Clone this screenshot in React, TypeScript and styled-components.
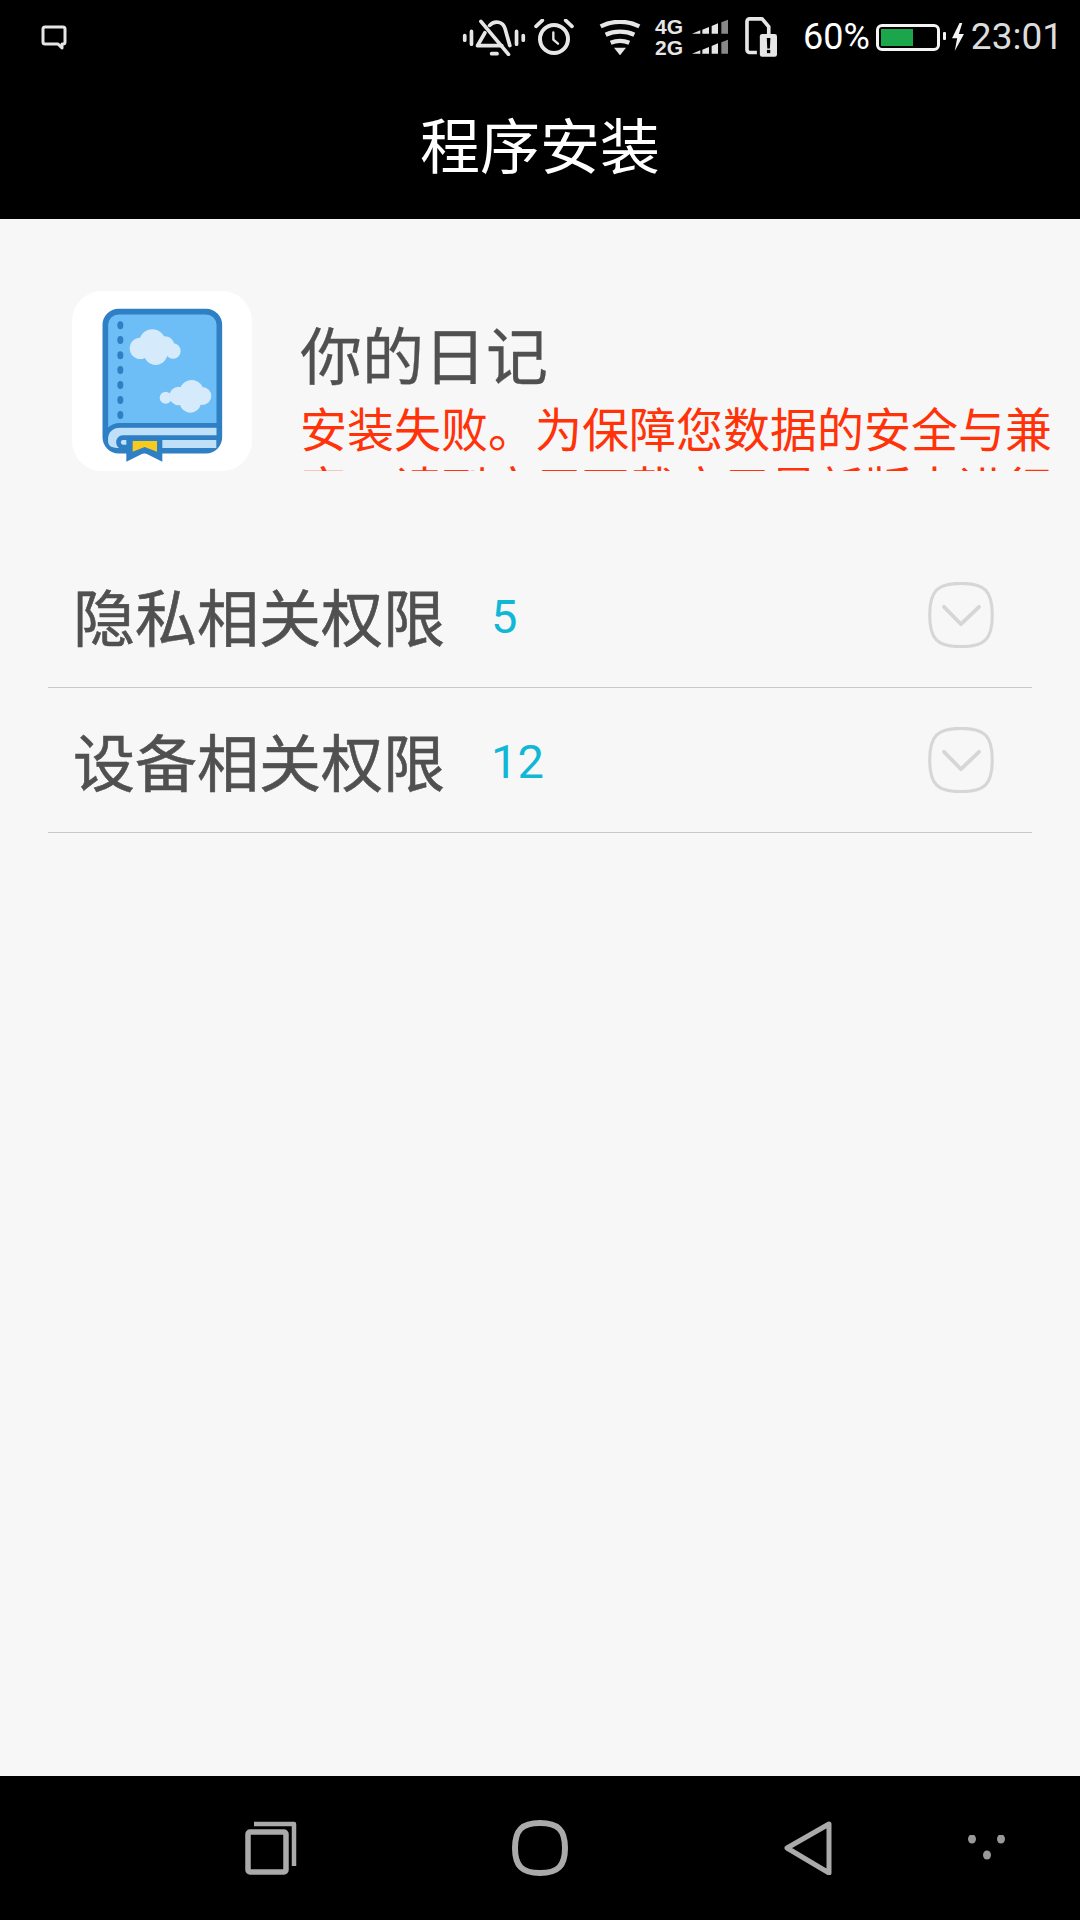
import React, { FC } from 'react';
import styled, { createGlobalStyle } from 'styled-components';

const GlobalStyle = createGlobalStyle`
  html, body {
    margin: 0;
    padding: 0;
    background: #f7f7f7;
    font-family: "Noto Sans CJK SC", "Noto Sans", sans-serif;
  }
`;

const Page = styled.div`
  display: flex;
  flex-direction: column;
  width: 1080px;
  height: 1920px;
  overflow: hidden;
  background: #f7f7f7;
`;

const TopArea = styled.header`
  display: flex;
  flex-direction: column;
  height: 219px;
  background: #000;
`;

const StatusBar = styled.div`
  display: flex;
  align-items: center;
  height: 74px;
  padding: 0 17px 0 41px;
  color: #e6e6e6;
`;

const StatusRight = styled.div`
  display: flex;
  align-items: center;
  margin-left: auto;
`;

const Glyph = styled.svg<{ $ml?: number }>`
  display: block;
  flex: none;
  margin-left: ${(p) => p.$ml ?? 0}px;
`;

const NetLabels = styled.div<{ $ml: number }>`
  display: flex;
  flex-direction: column;
  gap: 3px;
  margin-left: ${(p) => p.$ml}px;
  font-family: "Liberation Sans", sans-serif;
  font-size: 21px;
  font-weight: 700;
  line-height: 18px;
  color: #e6e6e6;
`;

const SignalStack = styled.div<{ $ml: number }>`
  display: flex;
  flex-direction: column;
  gap: 4px;
  margin-left: ${(p) => p.$ml}px;
`;

const Percent = styled.span<{ $ml: number }>`
  margin-left: ${(p) => p.$ml}px;
  font-family: Roboto, sans-serif;
  font-size: 36px;
  line-height: 42px;
  color: #fff;
`;

const Clock = styled.span<{ $ml: number }>`
  margin-left: ${(p) => p.$ml}px;
  font-family: Roboto, sans-serif;
  font-size: 37px;
  line-height: 42px;
  color: #dcdcdc;
`;

const Battery = styled.div<{ $ml: number }>`
  position: relative;
  box-sizing: border-box;
  width: 64px;
  height: 27px;
  margin-left: ${(p) => p.$ml}px;
  padding: 2px;
  border: 3px solid #f4f4f4;
  border-radius: 6px;

  &::after {
    content: '';
    position: absolute;
    top: 5px;
    right: -9px;
    width: 3px;
    height: 8px;
    border-radius: 1px;
    background: #f4f4f4;
  }
`;

const BatteryFill = styled.div<{ $level: number }>`
  width: ${(p) => p.$level}%;
  height: 100%;
  background: #1ba64c;
`;

const TitleBar = styled.h1`
  display: flex;
  flex: 1;
  align-items: center;
  justify-content: center;
  margin: 0;
  padding-bottom: 7px;
  font-size: 60px;
  font-weight: 400;
  line-height: 1;
  color: #fff;
`;

const Content = styled.main`
  display: flex;
  flex: 1;
  flex-direction: column;
`;

const AppHeader = styled.section`
  display: flex;
  gap: 48px;
  padding: 72px 20px 0 72px;
`;

const AppIcon = styled.div`
  flex: none;
  width: 180px;
  height: 180px;
  border-radius: 30px;
  background: #fff;
  overflow: hidden;
`;

const AppText = styled.div`
  flex: 1;
  height: 180px;
  padding-top: 26px;
  box-sizing: border-box;
  overflow: hidden;
`;

const AppName = styled.div`
  font-size: 62px;
  line-height: 72px;
  color: #505050;
  -webkit-text-stroke: 0.3px #505050;
`;

const AppError = styled.div`
  margin-top: 8px;
  width: 760px;
  font-size: 47px;
  line-height: 59px;
  color: #ff3209;
`;

const PermissionList = styled.section`
  display: flex;
  flex-direction: column;
  margin: 72px 48px 0;
`;

const PermissionRow = styled.div`
  display: flex;
  align-items: center;
  height: 144px;
  padding: 0 38px 0 25px;
  border-bottom: 1px solid #c9c9c9;
`;

const PermissionName = styled.span`
  font-size: 62px;
  line-height: 72px;
  color: #505050;
  -webkit-text-stroke: 0.6px #505050;
`;

const PermissionCount = styled.span`
  margin: 3px 0 0 46px;
  font-family: Roboto, sans-serif;
  font-size: 47px;
  line-height: 56px;
  color: #10b8d6;
`;

const Expand = styled.span`
  display: flex;
  margin: -1px 0 0 auto;
`;

const NavBar = styled.nav`
  display: flex;
  align-items: center;
  height: 144px;
  padding-left: 245px;
  background: #000;
`;

const StatusIcons: FC = () => (
  <StatusRight>
    <Glyph width="64" height="37" viewBox="10 25 190 110" fill="none" stroke="#e6e6e6" strokeWidth="11" strokeLinecap="round" strokeLinejoin="round">
      <path d="M18 74v14M38 62v38M172 62v38M192 74v14" />
      <path d="M66 32l82 98" />
      <path d="M92 44c14-16 40-12 46 10l14 50" />
      <path d="M78 66l-22 38h72" />
      <path d="M98 128h16" />
    </Glyph>
    <Glyph $ml={8} width="40" height="36" viewBox="225 28 120 108" fill="none" stroke="#e6e6e6" strokeLinecap="round" strokeLinejoin="round">
      <circle cx="285" cy="88" r="42" strokeWidth="12" />
      <path d="M283 68v22l14 12" strokeWidth="7" />
      <path d="M231 50l19-18M339 50l-19-18" strokeWidth="11" />
    </Glyph>
    <Glyph $ml={25} width="42" height="35" viewBox="420 30 126 105" fill="none" stroke="#e6e6e6" strokeWidth="13">
      <path d="M425 49c36-18 80-18 116 0" />
      <path d="M440 74c26-12 60-12 86 0" />
      <path d="M455 98c18-7 38-7 56 0" />
      <path d="M465 113h36l-18 23z" fill="#e6e6e6" stroke="none" />
    </Glyph>
    <NetLabels $ml={14}>
      <span>4G</span>
      <span>2G</span>
    </NetLabels>
    <SignalStack $ml={9}>
      {[0, 1].map((i) => (
        <Glyph key={i} width="36" height="16" viewBox="700 25 108 46">
          <path d="M700 68l25-10v10z" fill="#e6e6e6" />
          <path d="M731 56l20-8v20h-20z" fill="#e6e6e6" />
          <path d="M759 45l19-8v31h-19z" fill="#e6e6e6" />
          <path d="M788 34l20-8v42h-20z" fill="#888" />
        </Glyph>
      ))}
    </SignalStack>
    <Glyph $ml={17} width="32" height="40" viewBox="48 15 97 120" fill="none">
      <path d="M84 122H62a8 8 0 0 1-8-8V28a8 8 0 0 1 8-8h38l20 24v22" stroke="#e6e6e6" strokeWidth="11" strokeLinejoin="round" />
      <rect x="93" y="66" width="52" height="69" rx="7" fill="#e6e6e6" />
      <path d="M114 78h11l-1.500 32h-8z" fill="#000" />
      <rect x="114.500" y="114" width="10" height="10" fill="#000" />
    </Glyph>
    <Percent $ml={26}>60%</Percent>
    <Battery $ml={6}>
      <BatteryFill $level={60} />
    </Battery>
    <Glyph $ml={12} width="12" height="28" viewBox="670 40 35 82">
      <path d="M692 40l-22 45h15l-7 37 27-50h-15l10-32z" fill="#f4f4f4" />
    </Glyph>
    <Clock $ml={7}>23:01</Clock>
  </StatusRight>
);

const BookIcon: FC = () => (
  <svg width="180" height="180" viewBox="65 63 540 540">
    <rect x="165" y="125" width="342" height="417" rx="40" fill="#6dbdf6" stroke="#2e7fc3" strokeWidth="17" />
    <path d="M173 512c0-24 14-40 36-40h289v62H209c-22 0-36-4-36-22z" fill="#bfe0f8" />
    <path d="M165 510c0-26 18-44 44-44h298" fill="none" stroke="#2e7fc3" strokeWidth="14" />
    <path d="M500 503H218c-18 0-18 28 0 28h20" fill="none" stroke="#2e7fc3" strokeWidth="14" />
    <path d="M228 505h108v70l-54-27-54 27z" fill="#2e7fc3" />
    <path d="M247 513h73v32l-37-14-36 14z" fill="#f7cb1d" />
    {[166, 210, 256, 300, 345, 390, 435].map((y) => (
      <ellipse key={y} cx="210" cy={y} rx="9" ry="12" fill="#2e7fc3" />
    ))}
    <g fill="#d5eafa">
      <circle cx="270" cy="235" r="32" />
      <circle cx="306" cy="218" r="40" />
      <circle cx="345" cy="225" r="26" />
      <circle cx="368" cy="243" r="23" />
      <circle cx="316" cy="250" r="35" />
      <circle cx="346" cy="383" r="18" />
      <circle cx="385" cy="378" r="28" />
      <circle cx="424" cy="366" r="36" />
      <circle cx="456" cy="378" r="27" />
      <circle cx="420" cy="396" r="32" />
    </g>
  </svg>
);

const ChevronBox: FC = () => (
  <Glyph width="66" height="66" viewBox="143 68 194 194" fill="none" stroke="#d6d6d6" strokeLinecap="round" strokeLinejoin="round">
    <path d="M240 72c70 0 92 22 92 93s-22 93-92 93-92-22-92-93 22-93 92-93z" strokeWidth="9" />
    <path d="M190 141l50 51 53-51" strokeWidth="11" />
  </Glyph>
);

const permissions = [
  { name: '隐私相关权限', count: 5 },
  { name: '设备相关权限', count: 12 },
];

const App: FC = () => (
  <>
    <GlobalStyle />
    <Page>
      <TopArea>
        <StatusBar>
          <Glyph width="26" height="25" viewBox="0 0 26 25" fill="none">
            <path d="M4 2h18a2 2 0 0 1 2 2v13a2 2 0 0 1-2 2h-1v4l-4-4H4a2 2 0 0 1-2-2V4a2 2 0 0 1 2-2z" stroke="#e6e6e6" strokeWidth="3" strokeLinejoin="round" />
          </Glyph>
          <StatusIcons />
        </StatusBar>
        <TitleBar>程序安装</TitleBar>
      </TopArea>
      <Content>
        <AppHeader>
          <AppIcon>
            <BookIcon />
          </AppIcon>
          <AppText>
            <AppName>你的日记</AppName>
            <AppError>安装失败。为保障您数据的安全与兼容，请到应用下载应用最新版本进行安装。</AppError>
          </AppText>
        </AppHeader>
        <PermissionList>
          {permissions.map((item) => (
            <PermissionRow key={item.name}>
              <PermissionName>{item.name}</PermissionName>
              <PermissionCount>{item.count}</PermissionCount>
              <Expand>
                <ChevronBox />
              </Expand>
            </PermissionRow>
          ))}
        </PermissionList>
      </Content>
      <NavBar>
        <Glyph width="52" height="54" viewBox="245 1821 52 54" fill="none" stroke="#aaa" strokeLinejoin="round">
          <rect x="248" y="1832" width="38" height="40" rx="2" strokeWidth="5.500" />
          <path d="M254 1824h40v42" strokeWidth="4.500" />
        </Glyph>
        <Glyph $ml={215} width="56" height="56" viewBox="0 0 56 56" fill="none" stroke="#aaa" strokeWidth="6">
          <path d="M28 3c18 0 25 7 25 25s-7 25-25 25S3 46 3 28 10 3 28 3z" />
        </Glyph>
        <Glyph $ml={216} width="48" height="54" viewBox="784 1821 48 54" fill="none" stroke="#aaa" strokeWidth="5" strokeLinejoin="round">
          <path d="M829 1824l-42 24 42 25z" />
        </Glyph>
        <Glyph $ml={135} width="40" height="26" viewBox="967 1837 40 26" fill="#999">
          <ellipse cx="972" cy="1841" rx="4" ry="4.500" />
          <ellipse cx="1001" cy="1841" rx="4" ry="4.500" />
          <ellipse cx="987" cy="1857" rx="4" ry="4.500" />
        </Glyph>
      </NavBar>
    </Page>
  </>
);

export default App;
